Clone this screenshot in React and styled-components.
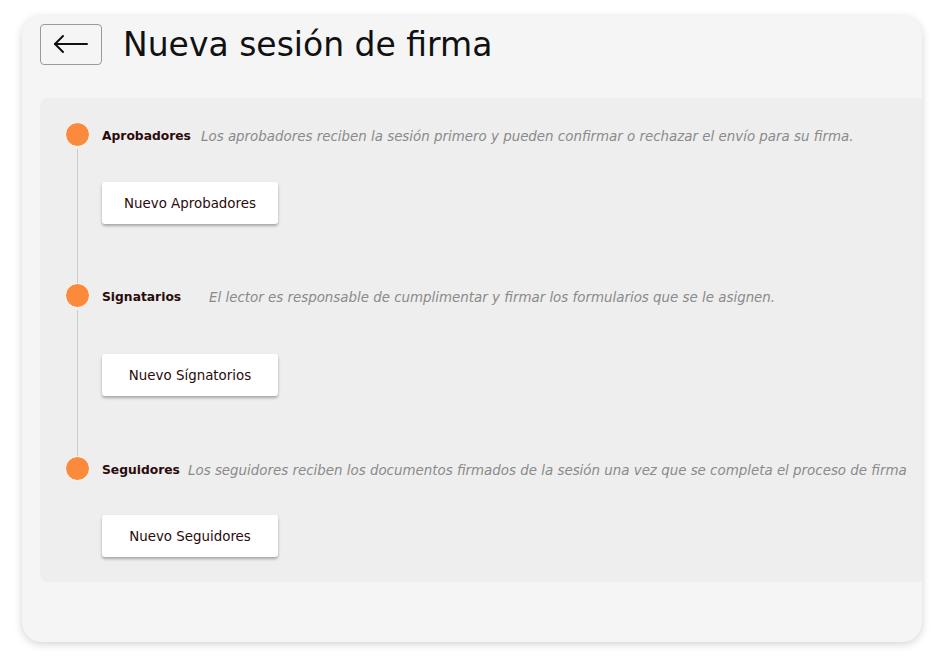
import styled, { createGlobalStyle } from 'styled-components'

const GlobalStyle = createGlobalStyle`
  html, body {
    margin: 0;
    padding: 0;
    background: #ffffff;
    font-family: "DejaVu Sans", "Noto Sans", sans-serif;
  }
`

const Page = styled.div`
  width: 944px;
  height: 658px;
  padding: 16px 22px 16px 22px;
  box-sizing: border-box;
`

const Card = styled.div`
  height: 626px;
  background: #f5f5f5;
  border-radius: 20px;
  box-shadow: 0 2px 8px rgba(0, 0, 0, 0.18);
  overflow: hidden;
  padding: 8px 0 0 18px;
  box-sizing: border-box;
`

const Header = styled.div`
  display: flex;
  align-items: center;
  gap: 21px;
  height: 40px;
`

const BackButton = styled.button`
  width: 62px;
  height: 41px;
  border: 1px solid #9a9a9a;
  border-radius: 4px;
  background: transparent;
  display: flex;
  align-items: center;
  justify-content: center;
  padding: 0;
  cursor: pointer;
`

const Title = styled.h1`
  margin: 0;
  font-size: 33px;
  font-weight: 400;
  color: #111;
`

const Panel = styled.div`
  margin-top: 34px;
  height: 484px;
  background: #eeeeee;
  border-radius: 8px 0 0 8px;
  padding: 24px 0 0 24px;
  box-sizing: border-box;
`

const Section = styled.div`
  display: grid;
  grid-template-columns: 26px 1fr;
  column-gap: 12px;
`

const Rail = styled.div`
  display: flex;
  flex-direction: column;
  align-items: center;
`

const Dot = styled.div`
  width: 25px;
  height: 25px;
  border-radius: 50%;
  background: #fb8a3c;
  border: 1px solid #ffffff;
  box-sizing: border-box;
  flex-shrink: 0;
`

const Line = styled.div`
  width: 1px;
  flex: 1;
  background: #cccccc;
  margin-top: 2px;
`

const Body = styled.div`
  display: flex;
  flex-direction: column;
`

const Head = styled.div`
  display: flex;
  align-items: center;
  height: 25px;
  padding-top: 3px;
  box-sizing: border-box;
  white-space: nowrap;
`

const Name = styled.span`
  font-weight: 700;
  font-size: 12.3px;
  color: #2a0b0b;
  width: ${p => p.$w}px;
  flex-shrink: 0;
`

const Desc = styled.span`
  font-style: italic;
  font-size: 13.4px;
  color: #8a8a8a;
`

const NewButton = styled.button`
  margin-top: ${p => p.$top}px;
  margin-bottom: ${p => p.$bottom}px;
  width: 176px;
  height: 42px;
  background: #ffffff;
  border: none;
  border-radius: 3px;
  box-shadow: 0 2px 3px rgba(0, 0, 0, 0.3);
  font-family: inherit;
  font-size: 13.4px;
  color: #2a0b0b;
  cursor: pointer;
`

const sections = [
  {
    name: 'Aprobadores',
    nameW: 99,
    desc: 'Los aprobadores reciben la sesión primero y pueden confirmar o rechazar el envío para su firma.',
    button: 'Nuevo Aprobadores',
    top: 35,
    bottom: 59,
    line: true,
  },
  {
    name: 'Signatarios',
    nameW: 107,
    desc: 'El lector es responsable de cumplimentar y firmar los formularios que se le asignen.',
    button: 'Nuevo Sígnatorios',
    top: 46,
    bottom: 60,
    line: true,
  },
  {
    name: 'Seguidores',
    nameW: 86,
    desc: 'Los seguidores reciben los documentos firmados de la sesión una vez que se completa el proceso de firma',
    button: 'Nuevo Seguidores',
    top: 34,
    bottom: 0,
    line: false,
  },
]

const ArrowIcon = () => (
  <svg width="36" height="20" viewBox="0 0 36 20" fill="none" stroke="#111" strokeWidth="2" strokeLinecap="round" strokeLinejoin="round">
    <path d="M2 10 H34" />
    <path d="M10 2 L2 10 L10 18" />
  </svg>
)

const App = () => {
  return (
    <>
      <GlobalStyle />
      <Page>
        <Card>
          <Header>
            <BackButton aria-label="Volver">
              <ArrowIcon />
            </BackButton>
            <Title>Nueva sesión de firma</Title>
          </Header>
          <Panel>
            {sections.map(s => (
              <Section key={s.name}>
                <Rail>
                  <Dot />
                  {s.line && <Line />}
                </Rail>
                <Body>
                  <Head>
                    <Name $w={s.nameW}>{s.name}</Name>
                    <Desc>{s.desc}</Desc>
                  </Head>
                  <NewButton $top={s.top} $bottom={s.bottom}>{s.button}</NewButton>
                </Body>
              </Section>
            ))}
          </Panel>
        </Card>
      </Page>
    </>
  )
}

export default App
